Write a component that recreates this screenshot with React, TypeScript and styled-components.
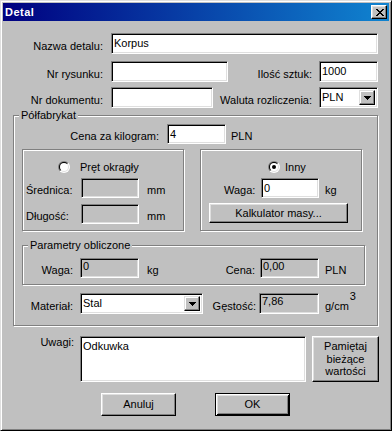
import React from 'react';
import styled, { createGlobalStyle, css } from 'styled-components';

const Global = createGlobalStyle`
  html, body { margin: 0; padding: 0; background: #c0c0c0; }
  body { font-family: "Liberation Sans", Arial, sans-serif; font-size: 11px; color: #000; }
  * { box-sizing: border-box; }
`;

const Window = styled.div`
  width: 392px;
  height: 431px;
  background: #c0c0c0;
  border: 1px solid;
  border-color: #dfdfdf #000 #000 #dfdfdf;
  box-shadow: inset 1px 1px #fff, inset -1px -1px #808080;
  padding: 2px;
  display: flex;
  flex-direction: column;
`;

const TitleBar = styled.div`
  height: 18px;
  flex-shrink: 0;
  display: flex;
  align-items: center;
  justify-content: space-between;
  padding-left: 2px;
  background: linear-gradient(to right, #000080, #1084d0);
`;

const Title = styled.span`
  color: #fff;
  font-weight: bold;
  font-size: 11px;
  letter-spacing: 0.5px;
  line-height: 13px;
`;

const CloseButton = styled.div`
  width: 16px;
  height: 14px;
  margin-right: 2px;
  background: #c0c0c0;
  border: 1px solid;
  border-color: #fff #000 #000 #fff;
  box-shadow: inset -1px -1px #808080, inset 1px 1px #dfdfdf;
  display: flex;
  align-items: center;
  justify-content: center;
  padding-left: 1px;
`;

const Body = styled.div`
  display: flex;
  flex-direction: column;
`;

const Row = styled.div<{ $mt: number; $h: number; $pl?: number; $top?: boolean }>`
  display: flex;
  align-items: ${(p) => (p.$top ? 'flex-start' : 'flex-end')};
  margin-top: ${(p) => p.$mt}px;
  height: ${(p) => p.$h}px;
  padding-left: ${(p) => p.$pl ?? 0}px;
  flex-shrink: 0;
`;

const Label = styled.span<{ $w?: number; $align?: 'left' | 'right'; $ml?: number; $top?: boolean }>`
  ${(p) => (p.$w !== undefined ? `width: ${p.$w}px;` : '')}
  text-align: ${(p) => p.$align ?? 'left'};
  margin-left: ${(p) => p.$ml ?? 0}px;
  line-height: 13px;
  padding-bottom: ${(p) => (p.$top ? 0 : 1)}px;
  white-space: nowrap;
  flex-shrink: 0;
  ${(p) => (p.$top ? 'align-self: flex-start;' : '')}
`;

const Sup = styled.span`
  vertical-align: 10px;
  line-height: 0;
  margin-left: 1px;
`;

const sunken = css`
  border: 1px solid;
  border-color: #808080 #fff #fff #808080;
  box-shadow: inset 1px 1px #000, inset -1px -1px #dfdfdf;
`;

const Field = styled.div<{ $w: number; $h?: number; $disabled?: boolean; $ml?: number }>`
  ${sunken}
  width: ${(p) => p.$w}px;
  height: ${(p) => p.$h ?? 20}px;
  margin-left: ${(p) => p.$ml ?? 0}px;
  background: ${(p) => (p.$disabled ? '#c0c0c0' : '#fff')};
  padding: 1px 2px;
  display: flex;
  align-items: ${(p) => (p.$disabled ? 'flex-start' : 'center')};
  line-height: ${(p) => (p.$disabled ? 12 : 13)}px;
  white-space: nowrap;
  overflow: hidden;
  flex-shrink: 0;
`;

const TextArea = styled.div<{ $w: number; $h: number; $ml?: number }>`
  ${sunken}
  width: ${(p) => p.$w}px;
  height: ${(p) => p.$h}px;
  margin-left: ${(p) => p.$ml ?? 0}px;
  background: #fff;
  padding: 3px 2px;
  line-height: 13px;
  flex-shrink: 0;
`;

const Combo = styled.div<{ $w: number; $h?: number; $ml?: number }>`
  ${sunken}
  width: ${(p) => p.$w}px;
  height: ${(p) => p.$h ?? 21}px;
  margin-left: ${(p) => p.$ml ?? 0}px;
  background: #fff;
  padding: 2px 2px 2px 2px;
  display: flex;
  align-items: stretch;
  flex-shrink: 0;
`;

const ComboText = styled.span`
  flex: 1;
  display: flex;
  align-items: center;
  line-height: 13px;
  padding-left: 0px;
`;

const ArrowButton = styled.span`
  width: 16px;
  background: #c0c0c0;
  border: 1px solid;
  border-color: #dfdfdf #000 #000 #dfdfdf;
  box-shadow: inset -1px -1px #808080, inset 1px 1px #fff;
  display: flex;
  align-items: center;
  justify-content: center;
`;

const Button = styled.button<{ $w: number; $h: number; $ml?: number; $default?: boolean }>`
  width: ${(p) => p.$w}px;
  height: ${(p) => p.$h}px;
  margin-left: ${(p) => p.$ml ?? 0}px;
  flex-shrink: 0;
  padding: 0;
  font-family: "Liberation Sans", Arial, sans-serif;
  font-size: 11px;
  line-height: 13px;
  color: #000;
  background: #c0c0c0;
  border: 1px solid;
  border-color: #fff #000 #000 #fff;
  box-shadow: inset -1px -1px #808080, inset 1px 1px #dfdfdf;
  ${(p) =>
    p.$default &&
    css`
      border-color: #000;
      box-shadow: inset 1px 1px #fff, inset -1px -1px #000, inset 2px 2px #dfdfdf, inset -2px -2px #808080;
    `}
`;

const Group = styled.div<{ $w: number; $h: number; $mt: number; $ml: number }>`
  position: relative;
  width: ${(p) => p.$w}px;
  height: ${(p) => p.$h}px;
  margin-top: ${(p) => p.$mt}px;
  margin-left: ${(p) => p.$ml}px;
  border: 1px solid #808080;
  box-shadow: inset 1px 1px #fff, 1px 1px #fff;
  display: flex;
  flex-direction: column;
  flex-shrink: 0;
`;

const Legend = styled.span`
  position: absolute;
  top: -7px;
  left: 5px;
  padding: 0 2px;
  background: #c0c0c0;
  line-height: 13px;
  white-space: nowrap;
`;

const GroupPair = styled.div`
  display: flex;
  gap: 16px;
  margin-top: 5px;
  padding-left: 8px;
`;

const RadioRow = styled.div<{ $pl: number; $gap: number }>`
  display: flex;
  align-items: center;
  height: 12px;
  margin-top: 11px;
  padding-left: ${(p) => p.$pl}px;
  gap: ${(p) => p.$gap}px;
`;

const RadioText = styled.span`
  line-height: 13px;
  white-space: nowrap;
`;

const Radio: React.FC<{ checked?: boolean; id: string }> = ({ checked, id }) => (
  <svg width="12" height="12" viewBox="0 0 12 12" style={{ flexShrink: 0 }}>
    <defs>
      <clipPath id={`${id}-tl`}>
        <polygon points="0,0 12,0 0,12" />
      </clipPath>
      <clipPath id={`${id}-br`}>
        <polygon points="12,0 12,12 0,12" />
      </clipPath>
    </defs>
    <circle cx="6" cy="6" r="6" fill="#fff" clipPath={`url(#${id}-br)`} />
    <circle cx="6" cy="6" r="6" fill="#808080" clipPath={`url(#${id}-tl)`} />
    <circle cx="6" cy="6" r="5" fill="#dfdfdf" clipPath={`url(#${id}-br)`} />
    <circle cx="6" cy="6" r="5" fill="#000" clipPath={`url(#${id}-tl)`} />
    <circle cx="6" cy="6" r="4" fill="#fff" />
    {checked && <circle cx="6" cy="6" r="2" fill="#000" />}
  </svg>
);

const Arrow = () => (
  <svg width="7" height="4" viewBox="0 0 7 4" shapeRendering="crispEdges">
    <rect x="0" y="0" width="7" height="1" fill="#000" />
    <rect x="1" y="1" width="5" height="1" fill="#000" />
    <rect x="2" y="2" width="3" height="1" fill="#000" />
    <rect x="3" y="3" width="1" height="1" fill="#000" />
  </svg>
);

const CloseGlyph = () => {
  const rows = ['11000011', '01100110', '00111100', '00011000', '00111100', '01100110', '11000011'];
  return (
    <svg width="8" height="7" viewBox="0 0 8 7" shapeRendering="crispEdges">
      {rows.flatMap((r, y) =>
        r.split('').map((c, x) => (c === '1' ? <rect key={`${x}-${y}`} x={x} y={y} width="1" height="1" fill="#000" /> : null))
      )}
    </svg>
  );
};

const ThreeLine = styled.span`
  display: block;
  line-height: 12.5px;
`;

export default function App() {
  return (
    <>
      <Global />
      <Window>
        <TitleBar>
          <Title>Detal</Title>
          <CloseButton>
            <CloseGlyph />
          </CloseButton>
        </TitleBar>
        <Body>
          <Row $mt={12} $h={21}>
            <Label $w={100} $align="right">Nazwa detalu:</Label>
            <Field $w={267} $h={21} $ml={8}>Korpus</Field>
          </Row>
          <Row $mt={7} $h={21}>
            <Label $w={100} $align="right">Nr rysunku:</Label>
            <Field $w={117} $h={21} $ml={8} />
            <Label $w={84} $align="right">Ilość sztuk:</Label>
            <Field $w={59} $h={21} $ml={7}>1000</Field>
          </Row>
          <Row $mt={5} $h={21}>
            <Label $w={100} $align="right">Nr dokumentu:</Label>
            <Field $w={102} $h={21} $ml={8} />
            <Label $w={99} $align="right">Waluta rozliczenia:</Label>
            <Combo $w={59} $ml={7}>
              <ComboText>PLN</ComboText>
              <ArrowButton>
                <Arrow />
              </ArrowButton>
            </Combo>
          </Row>

          <Group $w={365} $h={211} $mt={7} $ml={10}>
            <Legend>Półfabrykat</Legend>
            <Row $mt={8} $h={20}>
              <Label $w={145} $align="right">Cena za kilogram:</Label>
              <Field $w={59} $ml={8}>4</Field>
              <Label $ml={5}>PLN</Label>
            </Row>

            <GroupPair>
              <Group $w={162} $h={82} $mt={0} $ml={0}>
                <RadioRow $pl={35} $gap={10}>
                  <Radio id="r1" />
                  <RadioText>Pręt okrągły</RadioText>
                </RadioRow>
                <Row $mt={5} $h={20} $pl={3}>
                  <Label $w={55}>Średnica:</Label>
                  <Field $w={58} $disabled />
                  <Label $ml={8}>mm</Label>
                </Row>
                <Row $mt={6} $h={20} $pl={3}>
                  <Label $w={55}>Długość:</Label>
                  <Field $w={58} $disabled />
                  <Label $ml={8}>mm</Label>
                </Row>
              </Group>
              <Group $w={162} $h={82} $mt={0} $ml={0}>
                <RadioRow $pl={67} $gap={5}>
                  <Radio id="r2" checked />
                  <RadioText>Inny</RadioText>
                </RadioRow>
                <Row $mt={5} $h={20} $pl={23}>
                  <Label $w={37}>Waga:</Label>
                  <Field $w={58}>0</Field>
                  <Label $ml={6}>kg</Label>
                </Row>
                <Row $mt={5} $h={20} $pl={8}>
                  <Button $w={139} $h={20}>Kalkulator masy...</Button>
                </Row>
              </Group>
            </GroupPair>

            <Group $w={343} $h={40} $mt={14} $ml={8}>
              <Legend>Parametry obliczone</Legend>
              <Row $mt={12} $h={20}>
                <Label $w={50} $align="right">Waga:</Label>
                <Field $w={59} $ml={7} $disabled>0</Field>
                <Label $w={30} $ml={8}>kg</Label>
                <Label $w={78} $align="right">Cena:</Label>
                <Field $w={59} $ml={5} $disabled>0,00</Field>
                <Label $ml={6}>PLN</Label>
              </Row>
            </Group>

            <Row $mt={8} $h={21}>
              <Label $w={59} $align="right">Materiał:</Label>
              <Combo $w={123} $ml={7}>
                <ComboText>Stal</ComboText>
                <ArrowButton>
                  <Arrow />
                </ArrowButton>
              </Combo>
              <Label $w={53} $align="right">Gęstość:</Label>
              <Field $w={60} $h={21} $ml={3} $disabled>7,86</Field>
              <Label $ml={6}>
                g/cm<Sup>3</Sup>
              </Label>
            </Row>
          </Group>

          <Row $mt={10} $h={46} $top>
            <Label $w={71} $align="right" $top>Uwagi:</Label>
            <TextArea $w={226} $h={46} $ml={6}>Odkuwka</TextArea>
            <Button $w={67} $h={46} $ml={6}>
              <ThreeLine>Pamiętaj</ThreeLine>
              <ThreeLine>bieżące</ThreeLine>
              <ThreeLine>wartości</ThreeLine>
            </Button>
          </Row>

          <Row $mt={11} $h={23} $pl={98}>
            <Button $w={75} $h={23}>Anuluj</Button>
            <Button $w={75} $h={23} $ml={39} $default>OK</Button>
          </Row>
        </Body>
      </Window>
    </>
  );
}
